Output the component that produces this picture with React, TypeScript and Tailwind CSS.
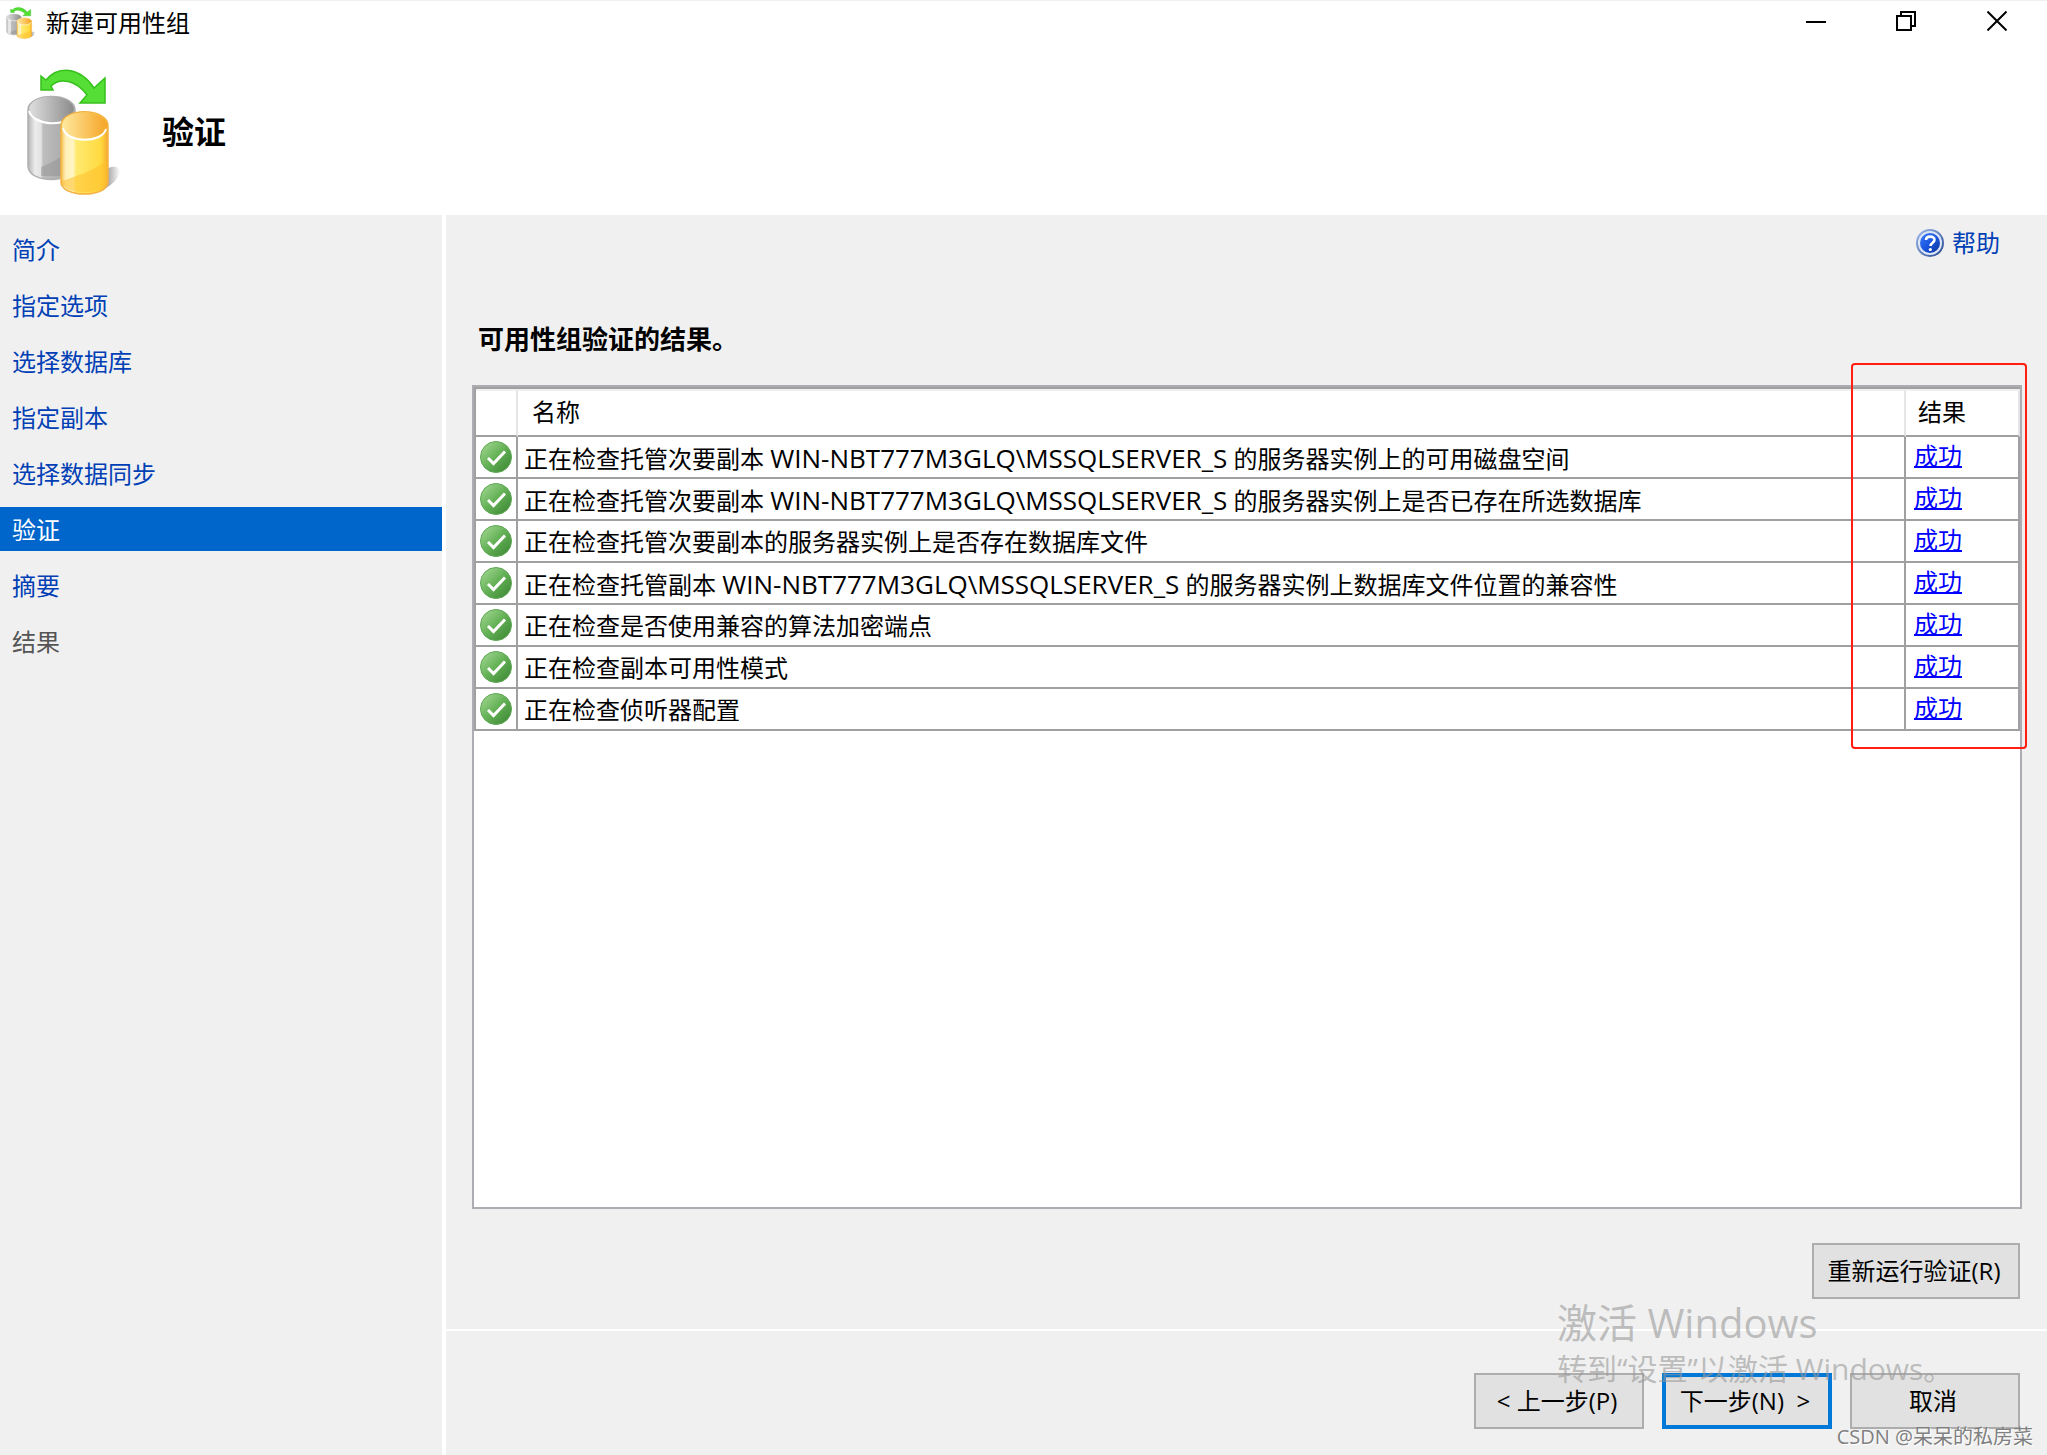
import React from 'react';

interface Step {
  key: string;
  label: string;
  disabled?: boolean;
}

interface Check {
  key: string;
  text: string;
  server?: string;
  rest?: string;
}

const SERVER = 'WIN-NBT777M3GLQ\\MSSQLSERVER_S';

const STEPS: Step[] = [
  { key: 'intro', label: '简介' },
  { key: 'options', label: '指定选项' },
  { key: 'databases', label: '选择数据库' },
  { key: 'replicas', label: '指定副本' },
  { key: 'sync', label: '选择数据同步' },
  { key: 'validation', label: '验证' },
  { key: 'summary', label: '摘要' },
  { key: 'results', label: '结果', disabled: true },
];

const CHECKS: Check[] = [
  { key: 'space', text: '正在检查托管次要副本 ', server: SERVER, rest: ' 的服务器实例上的可用磁盘空间' },
  { key: 'existing', text: '正在检查托管次要副本 ', server: SERVER, rest: ' 的服务器实例上是否已存在所选数据库' },
  { key: 'files', text: '正在检查托管次要副本的服务器实例上是否存在数据库文件' },
  { key: 'location', text: '正在检查托管副本 ', server: SERVER, rest: ' 的服务器实例上数据库文件位置的兼容性' },
  { key: 'encryption', text: '正在检查是否使用兼容的算法加密端点' },
  { key: 'mode', text: '正在检查副本可用性模式' },
  { key: 'listener', text: '正在检查侦听器配置' },
];

const DatabaseIcon = ({ id, className }: { id: string; className: string }) => (
  <svg viewBox="0 0 96 128" preserveAspectRatio="none" className={className} aria-hidden="true">
    <defs>
      <linearGradient id={`${id}-gray`} x1="0" x2="1">
        <stop offset="0" stopColor="#b4b4b4" />
        <stop offset="0.15" stopColor="#ececec" />
        <stop offset="0.28" stopColor="#e2e2e2" />
        <stop offset="0.32" stopColor="#bdbdbd" />
        <stop offset="1" stopColor="#a2a2a2" />
      </linearGradient>
      <linearGradient id={`${id}-grayTop`} x1="0" x2="1">
        <stop offset="0" stopColor="#dedede" />
        <stop offset="1" stopColor="#8c8c8c" />
      </linearGradient>
      <linearGradient id={`${id}-gold`} x1="0" x2="1">
        <stop offset="0" stopColor="#f6bd4a" />
        <stop offset="0.1" stopColor="#fff0b8" />
        <stop offset="0.26" stopColor="#fff6c4" />
        <stop offset="0.32" stopColor="#ffea70" />
        <stop offset="0.85" stopColor="#ffd940" />
        <stop offset="1" stopColor="#f5a92e" />
      </linearGradient>
      <linearGradient id={`${id}-goldTop`} x1="0" x2="1">
        <stop offset="0" stopColor="#ffe9a0" />
        <stop offset="1" stopColor="#f5a526" />
      </linearGradient>
      <linearGradient id={`${id}-shadow`} x1="0" x2="1">
        <stop offset="0" stopColor="#6e6e6e" stopOpacity="0.8" />
        <stop offset="1" stopColor="#6e6e6e" stopOpacity="0" />
      </linearGradient>
    </defs>
    <path d="M78 104 C84 96 94 98 94 104 C92 112 86 116 80 120 Z" fill={`url(#${id}-shadow)`} />
    <path d="M2 42 C2 24 49 24 49 42 V98 C49 116 2 116 2 98 Z" fill={`url(#${id}-gray)`} stroke="#b0b0b0" strokeWidth="1.5" />
    <path d="M15 99 C28 94 38 88 49 76 V108 H15 Z" fill="#8f8f8f" opacity="0.45" />
    <ellipse cx="25.5" cy="41" rx="22" ry="12.5" fill={`url(#${id}-grayTop)`} />
    <path d="M3 43 C7 58 42 60 48 45" fill="none" stroke="#fff" strokeWidth="2" />
    <path d="M35 58 C35 39 82 39 82 58 V114 C82 130 35 130 35 114 Z" fill={`url(#${id}-gold)`} stroke="#f3b243" strokeWidth="1.5" />
    <path d="M36 113 C50 108 66 104 81 92 V114 C80 128 38 128 36 114 Z" fill="#ffbf2b" opacity="0.55" />
    <ellipse cx="58.5" cy="57.500" rx="22.5" ry="13" fill={`url(#${id}-goldTop)`} />
    <path d="M37 60 C40 75 76 76 80 61" fill="none" stroke="#fff" strokeWidth="2" />
    <path
      d="M15 8 L20 12 C32 -3 54 -1 68 20 L79 10 V35 H54 L61 27 C50 12 34 9 25 18 L27 22 H15 Z"
      fill="#55de35"
      stroke="#35c01c"
      strokeWidth="1.5"
    />
  </svg>
);

const SuccessIcon = () => (
  <svg viewBox="0 0 32 32" className="block size-8" aria-hidden="true">
    <defs>
      <linearGradient id="ok-fill" x1="0" y1="0" x2="1" y2="1">
        <stop offset="0" stopColor="#a9dc98" />
        <stop offset="0.5" stopColor="#63b055" />
        <stop offset="1" stopColor="#388231" />
      </linearGradient>
    </defs>
    <circle cx="16" cy="16" r="15.5" fill="url(#ok-fill)" stroke="#5fa755" />
    <path d="M8 17 L13.5 22.5 L25 10.5" fill="none" stroke="#fff" strokeWidth="3" />
  </svg>
);

const HelpIcon = () => (
  <svg viewBox="0 0 28 28" className="size-7" aria-hidden="true">
    <defs>
      <linearGradient id="help-fill" x1="0" y1="0" x2="1" y2="1">
        <stop offset="0" stopColor="#3f7cf5" />
        <stop offset="0.5" stopColor="#1a56e0" />
        <stop offset="1" stopColor="#0b3594" />
      </linearGradient>
      <linearGradient id="help-ring" x1="0" y1="0" x2="1" y2="1">
        <stop offset="0" stopColor="#9db9ea" />
        <stop offset="1" stopColor="#2c4c94" />
      </linearGradient>
    </defs>
    <circle cx="14" cy="14" r="13" fill="#dce6f8" stroke="url(#help-ring)" strokeWidth="2" />
    <circle cx="14" cy="14" r="10" fill="url(#help-fill)" />
    <path d="M10 11 C10 6.500 18.5 6.500 18.5 10.8 C18.5 13.8 14.5 13.6 14.5 17" fill="none" stroke="#fff" strokeWidth="2.6" />
    <circle cx="14.3" cy="20.5" r="1.6" fill="#fff" />
  </svg>
);

const TitleBar = () => (
  <div className="flex h-12 items-start justify-between border-t border-[#f0f0f0]">
    <div className="flex items-center gap-2.5 pt-1.5 pl-1.5">
      <DatabaseIcon id="small" className="h-8 w-[30px]" />
      <h1 className="text-2xl leading-8">新建可用性组</h1>
    </div>
    <div className="flex">
      <button type="button" aria-label="最小化" className="flex h-10 w-[90px] items-center justify-center">
        <svg viewBox="0 0 20 20" className="size-5" aria-hidden="true">
          <path d="M0 11 H20" stroke="#000" strokeWidth="2" />
        </svg>
      </button>
      <button type="button" aria-label="还原" className="flex h-10 w-[90px] items-center justify-center">
        <svg viewBox="0 0 20 20" className="size-5" fill="none" stroke="#000" strokeWidth="2" aria-hidden="true">
          <path d="M1 5 H15 V19 H1 Z M5 5 V1 H19 V15 H15" />
        </svg>
      </button>
      <button type="button" aria-label="关闭" className="flex h-10 w-24 items-center justify-center pr-1">
        <svg viewBox="0 0 20 20" className="size-5" stroke="#000" strokeWidth="2" aria-hidden="true">
          <path d="M0.5 0.5 L19.5 19.5 M19.5 0.5 L0.5 19.5" />
        </svg>
      </button>
    </div>
  </div>
);

const Sidebar = ({ activeStep }: { activeStep: string }) => (
  <nav className="w-[446px] shrink-0 border-r-4 border-white pt-3">
    <ul className="flex flex-col gap-3">
      {STEPS.map(step => (
        <li key={step.key}>
          <button
            type="button"
            disabled={step.disabled}
            className={`
              block h-11 w-full px-3 pt-0.5 text-left text-2xl
              ${step.key === activeStep
                ? 'bg-[#0066cc] text-white'
                : step.disabled
                  ? 'text-[#555555]'
                  : 'text-[#003fb5]'
              }
            `}
          >
            {step.label}
          </button>
        </li>
      ))}
    </ul>
  </nav>
);

const ResultsTable = () => (
  <div className="relative flex-1 border-2 border-[#abadb3] bg-white">
    <table className="w-full table-fixed border-separate border-spacing-0 border-t-2 border-l-2 border-[#a0a0a0] text-left text-2xl">
      <colgroup>
        <col className="w-[42px]" />
        <col />
        <col className="w-[114px]" />
      </colgroup>
      <thead>
        <tr className="h-12">
          <th className="border-t-2 border-r-2 border-b-2 border-t-[#f0f0f0] border-r-[#e5e5e5] border-b-[#a0a0a0] p-0" />
          <th className="border-t-2 border-r-2 border-b-2 border-t-[#f0f0f0] border-r-[#e5e5e5] border-b-[#a0a0a0] pt-0 pr-0 pb-0.5 pl-3.5 font-normal">名称</th>
          <th className="border-t-2 border-r-2 border-b-2 border-t-[#f0f0f0] border-r-[#e5e5e5] border-b-[#a0a0a0] pt-0 pr-0 pb-0.5 pl-3 font-normal">结果</th>
        </tr>
      </thead>
      <tbody>
        {CHECKS.map(check => (
          <tr key={check.key} className="h-[42px]">
            <td className="border-r-2 border-b-2 border-[#a0a0a0] py-0 pr-0 pl-1">
              <SuccessIcon />
            </td>
            <td className="truncate border-r-2 border-b-2 border-[#a0a0a0] pt-0.5 pr-0 pb-0 pl-1.5 leading-8">
              {check.text}
              {check.server && <span className="text-[26px] leading-8">{check.server}</span>}
              {check.rest}
            </td>
            <td className="border-r-2 border-b-2 border-[#a0a0a0] py-0 pr-0 pl-2">
              <a href="#result" className="block pb-0.5 leading-8 text-[#0000ff] underline decoration-2">成功</a>
            </td>
          </tr>
        ))}
      </tbody>
    </table>
    {/* Highlight around the result column */}
    <div className="pointer-events-none absolute -top-6 -right-[7px] h-[386px] w-44 rounded border-2 border-[#ff1e10]" />
  </div>
);

const App: React.FC = () => (
  <div className="relative flex min-h-screen flex-col bg-white font-['Open_Sans','Noto_Sans_CJK_SC',sans-serif] text-black">
    <TitleBar />
    <header className="flex h-[167px] items-start gap-10 pt-5 pl-[26px]">
      <DatabaseIcon id="large" className="h-32 w-24" />
      <h2 className="pt-10 text-[32px] leading-[48px] font-bold">验证</h2>
    </header>

    <div className="flex flex-1 bg-[#f0f0f0]">
      <Sidebar activeStep="validation" />
      <main className="flex flex-1 flex-col">
        <section className="flex flex-1 flex-col border-b-2 border-white pt-2.5 pr-[25px] pb-[30px] pl-[26px]">
          <a href="#help" className="flex items-center gap-2 self-end pr-[22px] text-2xl leading-9 text-[#003fb5]">
            <HelpIcon />
            帮助
          </a>
          <h3 className="mt-[58px] mb-[26px] pl-1.5 text-[26px] leading-10 font-bold">可用性组验证的结果。</h3>
          <ResultsTable />
          <div className="flex justify-end pt-[34px] pr-0.5">
            <button type="button" className="h-14 w-52 border-2 border-[#adadad] bg-[#e1e1e1] pr-1 text-2xl">重新运行验证(R)</button>
          </div>
        </section>
        <footer className="flex h-[124px] items-start justify-end gap-[18px] pt-[42px] pr-[27px] text-2xl">
          <button type="button" className="h-14 w-[170px] border-2 border-[#adadad] bg-[#e1e1e1] pr-1">&lt; 上一步(P)</button>
          <button type="button" className="h-14 w-[170px] border-4 border-[#0078d7] bg-[#e1e1e1] pr-1 whitespace-pre">下一步(N)&nbsp; &gt;</button>
          <button type="button" className="h-14 w-[170px] border-2 border-[#adadad] bg-[#e1e1e1] pr-1">取消</button>
        </footer>
      </main>
    </div>

    {/* Activation notice over the window */}
    <div className="pointer-events-none absolute right-[90px] bottom-[66px] w-[400px] whitespace-nowrap text-[#999999]/60">
      <p className="text-[40px] leading-[48px]">激活 Windows</p>
      <p className="pt-0.5 text-[30px] leading-10">转到“设置”以激活 Windows。</p>
    </div>
    <p className="pointer-events-none absolute right-3.5 bottom-1 text-xl leading-7 text-[#808080] [text-shadow:1px_1px_0_#ffffff]">CSDN @呆呆的私房菜</p>
  </div>
);

export default App;
